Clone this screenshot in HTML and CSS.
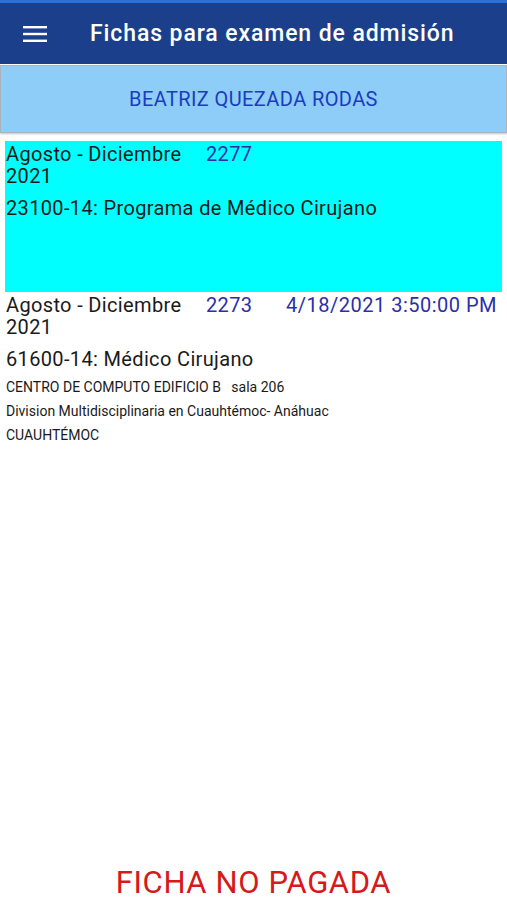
FILE: index.html
```html
<!DOCTYPE html>
<html lang="es">
<head>
    <meta charset="UTF-8">
    <meta name="viewport" content="width=device-width, initial-scale=1.0">
    <title>Fichas para examen de admisión</title>
    <link rel="stylesheet" href="styles.css">
</head>
<body>
    <div class="app">
        <div class="status-strip"></div>
        <header class="toolbar">
            <button class="menu-btn" aria-label="Menú">
                <svg width="24" height="18" viewBox="0 0 24 18">
                    <rect x="0" y="1" width="24" height="2.4" fill="#fff"/>
                    <rect x="0" y="7.8" width="24" height="2.4" fill="#fff"/>
                    <rect x="0" y="14.6" width="24" height="2.4" fill="#fff"/>
                </svg>
            </button>
            <h1>Fichas para examen de admisión</h1>
        </header>

        <div class="student-bar">BEATRIZ QUEZADA RODAS</div>

        <main class="fichas">
            <div class="ficha selected">
                <div class="ficha-head">
                    <span class="periodo">Agosto - Diciembre 2021</span>
                    <span class="folio">2277</span>
                    <span class="fecha"></span>
                </div>
                <div class="programa">23100-14: Programa de Médico Cirujano</div>
            </div>

            <div class="ficha">
                <div class="ficha-head">
                    <span class="periodo">Agosto - Diciembre 2021</span>
                    <span class="folio">2273</span>
                    <span class="fecha">4/18/2021 3:50:00 PM</span>
                </div>
                <div class="programa">61600-14: Médico Cirujano</div>
                <div class="detalle">CENTRO DE COMPUTO EDIFICIO B&nbsp;&nbsp; sala 206</div>
                <div class="detalle">Division Multidisciplinaria en Cuauhtémoc- Anáhuac</div>
                <div class="detalle">CUAUHTÉMOC</div>
            </div>
        </main>

        <footer class="estado">FICHA NO PAGADA</footer>
    </div>
</body>
</html>
```

FILE: styles.css
```css
body {
    margin: 0;
    font-family: Roboto, "Liberation Sans", Arial, sans-serif;
    background-color: #fff;
    color: #1a1a1a;
}

.app {
    display: flex;
    flex-direction: column;
    height: 900px;
}

.status-strip {
    height: 3px;
    background-color: #2b6fd8;
}

.toolbar {
    display: flex;
    align-items: center;
    height: 61px;
    background-color: #1b3f8b;
    color: #fff;
}

.menu-btn {
    display: flex;
    align-items: center;
    background: none;
    border: none;
    padding: 0;
    margin-left: 23px;
    width: 24px;
    height: 18px;
}

.toolbar h1 {
    margin: 0 0 0 43px;
    font-size: 23px;
    font-weight: 500;
    letter-spacing: 0.9px;
}

.student-bar {
    margin-top: 1px;
    height: 66px;
    display: flex;
    align-items: center;
    justify-content: center;
    background-color: #8dcdf8;
    border: 1px solid #a9b4bd;
    box-shadow: 0 1px 2px rgba(0, 0, 0, 0.25);
    color: #1a3cbf;
    font-size: 20px;
    letter-spacing: 0.4px;
}

.fichas {
    flex: 1;
    padding: 8px 5px 0;
}

.ficha {
    padding: 2px 1px 0;
    font-size: 20px;
    line-height: 22px;
    letter-spacing: 0.35px;
}

.ficha.selected {
    background-color: #00ffff;
    min-height: 149px;
}

.ficha-head {
    display: grid;
    grid-template-columns: 200px 80px 1fr;
}

.folio,
.fecha {
    color: #2b2fa8;
}

.fecha {
    letter-spacing: 0.5px;
}

.programa {
    margin-top: 10px;
}

.detalle {
    font-size: 14px;
    line-height: 24px;
    letter-spacing: 0;
}

.ficha .programa + .detalle {
    margin-top: 5px;
}

.estado {
    text-align: center;
    color: #d41a1a;
    font-size: 31px;
    letter-spacing: 0.6px;
    line-height: 34px;
    padding-top: 6px;
}
```
